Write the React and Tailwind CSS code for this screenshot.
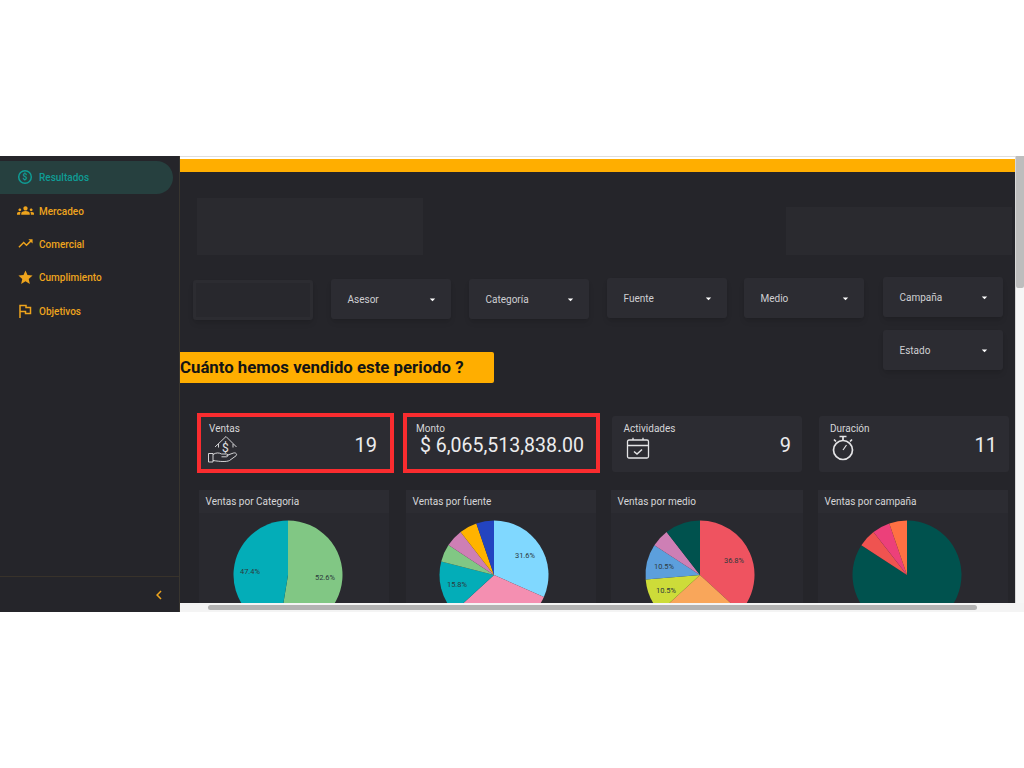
import React from 'react'
import {
  MdChevronLeft,
  MdArrowDropDown,
  MdGroups,
  MdStar,
  MdTrendingUp,
} from 'react-icons/md'

function DollarIcon({ className }) {
  return (
    <svg width="16" height="16" viewBox="0 0 16 16" fill="none" stroke="currentColor" strokeWidth="1.500" className={className}>
      <circle cx="8" cy="8" r="6.300" />
      <text x="8" y="11" fontSize="8.500" fontWeight="700" fill="currentColor" stroke="none" textAnchor="middle">$</text>
    </svg>
  )
}

function FlagIcon({ className }) {
  return (
    <svg width="14" height="14" viewBox="0 0 14 14" fill="none" stroke="currentColor" strokeWidth="1.500" className={className}>
      <path d="M2 14V1.500H8V3.500H12.500V9.500H7.500V7.500H2" />
    </svg>
  )
}

const NAV = [
  { label: 'Resultados', icon: DollarIcon, active: true },
  { label: 'Mercadeo', icon: MdGroups },
  { label: 'Comercial', icon: MdTrendingUp },
  { label: 'Cumplimiento', icon: MdStar },
  { label: 'Objetivos', icon: FlagIcon },
]

const CHARTS = [
  {
    title: 'Ventas por Categoria',
    width: 'w-[190px]',
    margin: 'ml-[19px]',
    cx: 89,
    slices: [
      [52.6, '#81c784'],
      [47.4, '#03adb8'],
    ],
    labels: [
      ['52.6%', 126, 67],
      ['47.4%', 51, 61],
    ],
  },
  {
    title: 'Ventas por fuente',
    width: 'w-[190px]',
    margin: 'ml-[17px]',
    cx: 88,
    slices: [
      [31.6, '#80d8ff'],
      [31.6, '#f48fb1'],
      [15.8, '#03adb8'],
      [5.25, '#81c784'],
      [5.25, '#ce7fb5'],
      [5.25, '#ffb300'],
      [5.25, '#2344c0'],
    ],
    labels: [
      ['31.6%', 119, 45],
      ['15.8%', 51, 74],
    ],
  },
  {
    title: 'Ventas por medio',
    width: 'w-[192px]',
    margin: 'ml-[15px]',
    cx: 89,
    slices: [
      [36.8, '#ef5360'],
      [26.4, '#f9a65a'],
      [10.5, '#cddc39'],
      [10.5, '#5c9fdc'],
      [5.3, '#ce7fb5'],
      [10.5, '#00524e'],
    ],
    labels: [
      ['36.8%', 123, 50],
      ['10.5%', 53, 56],
      ['10.5%', 55, 80],
    ],
  },
  {
    title: 'Ventas por campaña',
    width: 'w-[190px]',
    margin: 'ml-[15px]',
    cx: 89,
    slices: [
      [84.2, '#00524e'],
      [5.26, '#ef5350'],
      [5.27, '#ec407a'],
      [5.27, '#ff7043'],
    ],
    labels: [],
  },
]

function polar(cx, cy, r, pct) {
  const a = (pct / 100) * Math.PI * 2
  return [cx + r * Math.sin(a), cy - r * Math.cos(a)]
}

function Pie({ slices, labels, cx }) {
  let acc = 0
  return (
    <svg width="100%" height="125" className="block">
      {slices.map(([pct, color], i) => {
        const [x1, y1] = polar(cx, 62, 54.5, acc)
        acc += pct
        const [x2, y2] = polar(cx, 62, 54.5, acc)
        const large = pct > 50 ? 1 : 0
        return <path key={i} d={`M${cx} 62L${x1} ${y1}A54.5 54.5 0 ${large} 1 ${x2} ${y2}Z`} fill={color} />
      })}
      {labels.map(([text, x, y]) => (
        <text key={text + y} x={x} y={y} fontSize="7.5" fill="#2c3a3c" textAnchor="middle">
          {text}
        </text>
      ))}
    </svg>
  )
}

function Filter({ label, className }) {
  return (
    <div
      className={`flex h-10 w-[120px] items-center justify-between rounded-[3px] bg-[#2c2c32] pl-[16.500px] pr-[12px] pt-[1px] text-[10px] text-[#cfcfd2] shadow-md ${className}`}
    >
      <span>{label}</span>
      <MdArrowDropDown className="text-[13px] text-white" />
    </div>
  )
}

function HouseHand() {
  return (
    <svg width="30" height="28" viewBox="0 0 30 28" fill="none" stroke="#e4e4e6" strokeWidth="0.9" className="-ml-[1px]">
      <path d="M7 12L18 1.500L28.500 12" />
      <path d="M10.500 9V12.500M25 9V12.500" />
      <text x="14" y="17" fontSize="12" fill="#e4e4e6" stroke="none">$</text>
      <path d="M.5 18.500h4.500v8.500H.5z" />
      <path d="M5 19.500c3-2 6-2 8.500-.5h5c1.800 0 1.800 2.800 0 2.800h-5" />
      <path d="M18.500 20.500l7-2.500c2.500-.7 4 1.500 2.500 2.800l-6.500 4.700c-3 1.500-9 1.200-16.500 0" />
    </svg>
  )
}

function CalendarIcon() {
  return (
    <svg width="24" height="22" viewBox="0 0 24 22" fill="none" stroke="#e4e4e6" strokeWidth="1.300" className="ml-[2px] mt-[2px]">
      <rect x="1.500" y="3" width="21" height="18" rx="1.500" />
      <path d="M1.500 8.500H22.500M7 .8V3M17 .8V3" />
      <path d="M8 14.500l3 2.500 5-4.500" strokeWidth="1.500" />
    </svg>
  )
}

function TimerIcon() {
  return (
    <svg width="24" height="26" viewBox="0 0 24 26" fill="none" stroke="#e4e4e6" strokeWidth="1.700" className="ml-[1px]">
      <circle cx="12" cy="15" r="9.500" />
      <path d="M8.500 1.500H15.500M12 1.500V5.500M19 6.500l2-2M5 6.500l-2-2" />
      <path d="M12 15l3.500-5" strokeWidth="1.200" />
    </svg>
  )
}

function StatCard({ label, value, icon, className, valueClass = '' }) {
  return (
    <div className={`relative shrink-0 bg-[#2c2c32] ${className}`}>
      <div className="text-[10px] leading-3 text-[#d6d6d8]">{label}</div>
      {icon}
      <div className={`absolute leading-6 text-[#ececee] ${valueClass}`}>{value}</div>
    </div>
  )
}

export default function App() {
  return (
    <div className="flex h-screen w-[1024px] flex-col overflow-hidden bg-white font-['Roboto',sans-serif]">
      <div className="h-[156px] shrink-0" />
      <div className="flex h-[456px] shrink-0">
        <aside className="flex w-[180px] shrink-0 flex-col border-r border-[#38352f] bg-[#25252a]">
          <nav className="flex flex-1 flex-col pr-[6px] pt-[4.500px]">
            {NAV.map(({ label, icon: Icon, active }) => (
              <div
                key={label}
                className={`flex h-[33.400px] items-center gap-[5px] rounded-r-[17px] pl-[16px] text-[10px] font-medium ${
                  active ? 'bg-[#26403f] text-[#0f9c95]' : 'text-[#eea41d]'
                }`}
              >
                <span className="flex w-[18px] justify-center">
                  <Icon className="text-[17px]" />
                </span>
                <span className="pt-[1px]">{label}</span>
              </div>
            ))}
          </nav>
          <div className="flex h-[36px] items-center justify-end border-t border-[#38322a] pr-[11px] text-[#eea41d]">
            <MdChevronLeft className="text-[18px]" />
          </div>
        </aside>

        <div className="flex min-w-0 flex-1 flex-col">
          <div className="flex min-h-0 flex-1">
            <main className="min-w-0 flex-1 overflow-hidden bg-[#25252a]">
              <div className="h-[3px] border-t border-[#dedede] bg-white" />
              <div className="h-[13px] bg-[#ffae00]" />

              <div className="flex h-[83px] items-end justify-between pl-[17px] pr-[3px]">
                <div className="h-[57px] w-[226px] bg-[#2a2a2f]" />
                <div className="h-[48px] w-[226px] bg-[#2a2a2f]" />
              </div>

              <div className="flex h-[97px] items-start pl-[13px]">
                <div className="mt-[25px] h-10 w-[120px] rounded-[3px] border-[3px] border-[#2c2c31] bg-[#28282d] shadow-md" />
                <Filter label="Asesor" className="ml-[18px] mt-[24px]" />
                <Filter label="Categoría" className="ml-[18px] mt-[24px]" />
                <Filter label="Fuente" className="ml-[18px] mt-[23px]" />
                <Filter label="Medio" className="ml-[17px] mt-[23px]" />
                <div className="ml-[19px] mt-[22px] flex flex-col gap-[13px]">
                  <Filter label="Campaña" />
                  <Filter label="Estado" />
                </div>
              </div>

              <div className="flex h-[31px] w-[314px] items-center rounded-r-[2px] bg-[#ffae00] pt-[1px] text-[16.800px] font-bold text-[#141414]">
                Cuánto hemos vendido este periodo ?
              </div>

              <div className="mt-[30px] flex items-start pl-[17px]">
                <StatCard
                  label="Ventas"
                  value="19"
                  className="h-[60px] w-[197px] border-[4px] border-[#f92c2f] pl-[8px] pt-[6px]"
                  valueClass="right-[13px] top-[16px] text-[20px]"
                  icon={<HouseHand />}
                />
                <StatCard
                  label="Monto"
                  value="$ 6,065,513,838.00"
                  className="ml-[9px] h-[60px] w-[197px] border-[4px] border-[#f92c2f] pl-[9px] pt-[6px]"
                  valueClass="left-[13px] top-[17px] whitespace-nowrap text-[19.500px]"
                />
                <StatCard
                  label="Actividades"
                  value="9"
                  className="ml-[12px] mt-[3px] h-[56px] w-[190px] rounded-[3px] pl-[11.500px] pt-[7px]"
                  valueClass="right-[11px] top-[17px] text-[20px]"
                  icon={<CalendarIcon />}
                />
                <StatCard
                  label="Duración"
                  value="11"
                  className="ml-[17px] mt-[3px] h-[56px] w-[190px] rounded-[3px] pl-[11px] pt-[7px]"
                  valueClass="right-[12px] top-[17px] text-[20px]"
                  icon={<TimerIcon />}
                />
              </div>

              <div className="mt-[17px] flex items-start">
                {CHARTS.map((chart) => (
                  <section key={chart.title} className={`shrink-0 bg-[#29292f] ${chart.width} ${chart.margin}`}>
                    <h3 className="flex h-[23px] items-center bg-[#2c2c32] pl-[6.500px] text-[10px] font-normal text-[#d6d6d8]">
                      {chart.title}
                    </h3>
                    <Pie slices={chart.slices} labels={chart.labels} cx={chart.cx} />
                  </section>
                ))}
              </div>
            </main>
            <div className="flex w-[9px] shrink-0 flex-col border-l border-[#d8d8d8] bg-[#f6f6f6]">
              <div className="h-[132px] rounded-b-[2px] bg-[#bdbdbd]" />
            </div>
          </div>
          <div className="flex h-[9px] shrink-0 items-center bg-[#f4f4f4] pl-[28px]">
            <div className="h-[5px] w-[769px] rounded-full bg-[#b3b3b3]" />
          </div>
        </div>
      </div>
    </div>
  )
}
